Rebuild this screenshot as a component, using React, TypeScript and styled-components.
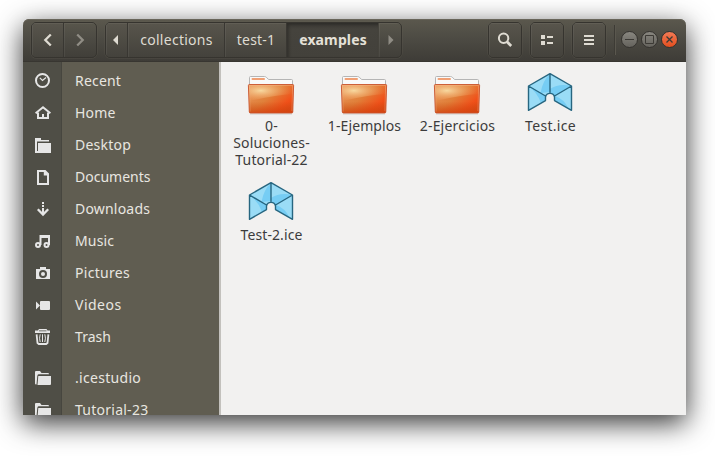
import React from "react";
import styled, { createGlobalStyle } from "styled-components";

const GlobalStyle = createGlobalStyle`
  * { box-sizing: border-box; }
  html, body { margin: 0; background: #fff; overflow: hidden; }
  body { font-family: "Noto Sans", "Open Sans", sans-serif; font-size: 14px; }
  svg { display: block; flex: none; }
`;

const Desktop = styled.div`
  width: 715px;
  height: 456px;
  padding: 19px 29px 41px 23px;
  overflow: hidden;
`;

const Window = styled.main`
  display: flex;
  flex-direction: column;
  height: 396px;
  border-radius: 6px 6px 0 0;
  box-shadow: 0 8px 28px rgba(0, 0, 0, 0.8);
`;

const HeaderBar = styled.header`
  display: flex;
  flex: none;
  align-items: flex-start;
  height: 43px;
  padding: 3px 8px 0;
  border-radius: 6px 6px 0 0;
  background: linear-gradient(#5b584d, #504e46 35%, #3e3c37);
  border-bottom: 1px solid #383631;
  box-shadow: inset 0 1px #68655a;
`;

const ButtonGroup = styled.div`
  display: flex;
  height: 36px;
  margin-right: 8px;
  border: 1px solid #36342f;
  border-radius: 5px;
  box-shadow: 0 0 0 0.5px rgba(110, 107, 95, 0.35);
  overflow: hidden;
`;

const HeaderButton = styled.button<{ $width: number; $active?: boolean; $dim?: boolean; $tracking?: number }>`
  display: flex;
  align-items: center;
  justify-content: center;
  width: ${(p) => p.$width}px;
  height: 34px;
  padding: 0 0 1px ${(p) => (p.$tracking ? 1 : 0)}px;
  border: 0;
  border-right: 1px solid ${(p) => (p.$active ? "#45433c" : "#393732")};
  font: inherit;
  font-weight: ${(p) => (p.$active ? 700 : 400)};
  letter-spacing: ${(p) => p.$tracking ?? 0}px;
  color: ${(p) => (p.$active ? "#e5e1d8" : p.$dim ? "#908d85" : "#dfdbd2")};
  background: ${(p) => (p.$active ? "linear-gradient(#3d3b36, #45433d 20%, #43413b)" : p.$dim ? "transparent" : "linear-gradient(#58554c, #44423c)")};
  box-shadow: ${(p) => (p.$active ? "inset 2px 2px 3px rgba(0,0,0,.25)" : "inset 1px 1px rgba(255,255,255,.055)")};
  &:last-child { border-right: 0; }
`;

const Spacer = styled.div`
  flex: 1;
`;

const Separator = styled.div`
  width: 2px;
  height: 30px;
  margin: 3px 5px 0 0;
  border-left: 1px solid #3d3b35;
  border-right: 1px solid #5a574e;
`;

const WindowControls = styled.div`
  display: flex;
  gap: 3px;
  padding-top: 9px;
`;

const ControlButton = styled.button<{ $close?: boolean }>`
  display: grid;
  place-items: center;
  width: 17px;
  height: 17px;
  padding: 0;
  border: 1px solid #35332f;
  border-radius: 50%;
  background: ${(p) => (p.$close ? "linear-gradient(#f37a55, #e34f1f)" : "linear-gradient(#88867f, #65635d)")};
  color: #3c3a35;
`;

const Body = styled.div`
  display: flex;
  flex: 1;
  min-height: 0;
  background: #f2f1f0;
`;

const Sidebar = styled.nav`
  width: 198px;
  padding-top: 3px;
  overflow: hidden;
  border-right: 2px solid #c3c1bd;
  background: linear-gradient(90deg, #4f4e46 0 38px, #47463f 38px 39px, #605d51 39px);
`;

const Place = styled.div<{ $tracking: number; $spaced?: boolean }>`
  display: flex;
  align-items: center;
  gap: 24px;
  height: 32px;
  margin-top: ${(p) => (p.$spaced ? 9 : 0)}px;
  padding-left: 12px;
  white-space: nowrap;
  color: #e8e6e0;
  letter-spacing: ${(p) => p.$tracking}px;
`;

const PlaceLabel = styled.span`
  padding-bottom: 2px;
`;

const Files = styled.section`
  display: grid;
  grid-template-columns: repeat(4, 93px);
  grid-auto-rows: 109px;
  flex: 1;
  align-content: start;
  padding: 7px 0 0 3.5px;
`;

const File = styled.figure`
  display: flex;
  flex-direction: column;
  align-items: center;
  margin: 0;
  color: #3c3c3c;
`;

const FileName = styled.figcaption<{ $tracking: number }>`
  padding-left: 1px;
  line-height: 17px;
  text-align: center;
  white-space: pre;
  letter-spacing: ${(p) => p.$tracking}px;
`;

const glyphs: Record<string, React.ReactNode> = {
  recent: (
    <g fill="none" stroke="#e6e6e6">
      <circle cx="7.5" cy="7.5" r="6.5" strokeWidth="2" />
      <path d="M4.8 4.8 7.5 7.5 11 4.5" strokeWidth="1.2" />
    </g>
  ),
  home: (
    <g fill="none" stroke="#e6e6e6" strokeWidth="2">
      <path d="M.6 8.2 8 2.2l7.4 6" />
      <path d="M3 7.5V13h10V7.5M8 14V9" />
    </g>
  ),
  desktop: (
    <>
      <path d="M0 1h6v2h8v1.5H2V14h1v2H0z" />
      <path d="M3 6h13v10H3z" />
    </>
  ),
  folder: (
    <>
      <path d="M0 2q0-1 1-1h4l1.5 2H13q1 0 1 1.2H3.5Q2.5 4.5 2.3 6L1.5 14.5H1Q0 14.5 0 13.5z" />
      <path d="M3.3 6H16v8q0 1-1 1H2.5z" />
    </>
  ),
  documents: <path fillRule="evenodd" d="M2 1h8.5L14 4.5V16H2zM4 3v11h8V6.5H8.8V3z" />,
  downloads: (
    <>
      <path d="M7 1h2v2H7zM7 4h2v2H7zM7 7h2v5H7z" />
      <path d="m2.8 8.3 5.2 5.2 5.2-5.2" fill="none" stroke="#e6e6e6" strokeWidth="2.3" />
    </>
  ),
  music: (
    <g fill="none" stroke="#e6e6e6" strokeWidth="2">
      <circle cx="3" cy="12" r="2" />
      <circle cx="11.5" cy="12" r="2" />
      <path d="M5.5 12V3H14v9M6 4h8" />
    </g>
  ),
  pictures: (
    <>
      <path fillRule="evenodd" d="M5 2h6v2h4v10H1V4h4zM8 5a4 4 0 1 0 0 8 4 4 0 0 0 0-8z" />
      <circle cx="8" cy="9" r="2" />
    </>
  ),
  videos: (
    <>
      <rect x="5" y="4" width="10" height="9" rx="1" />
      <path d="M1 4.5 5 8.5l-4 4z" />
    </>
  ),
  trash: (
    <>
      <path fillRule="evenodd" d="M4 0h7.5l1 1.5H15V4H0V1.5h3zM4 1.5v.8h7.5v-.8z" />
      <path d="M1.6 5.3 2.5 14l1.3 1h7.4l1.3-1 .9-8.7" fill="none" stroke="#e6e6e6" strokeWidth="1.8" />
      <path d="M5.2 5.3q-1.3 4 0 7.7M7.5 5.3V13M9.8 5.3q1.3 4 0 7.7" fill="none" stroke="#e6e6e6" />
    </>
  ),
};

const PlaceIcon = ({ name }: { name: string }) => (
  <svg width="16" height="16" viewBox="0 0 16 16" fill="#e6e6e6">{glyphs[name]}</svg>
);

const Chevron = ({ right }: { right?: boolean }) => (
  <svg width="16" height="16" viewBox="0 0 16 16" fill="none" stroke="currentColor" strokeWidth="2.3">
    <path d={right ? "m5.2 2.5 5.5 5.5-5.5 5.5" : "M10.8 2.5 5.3 8l5.5 5.5"} />
  </svg>
);

const Arrow = ({ right }: { right?: boolean }) => (
  <svg width="8" height="10" viewBox="0 0 8 10" fill="currentColor">
    <path d={right ? "M2.5 0v10L7.5 5z" : "M5 0v10L0 5z"} />
  </svg>
);

const folderFront = "M2.3 15.5h43.4q1 0 .9 1l-.8 26.500q-.1 1-1.100 1H3.400q-1 0-1.100-1l-.9-26.500q0-1 .9-1z";

const FolderIcon = () => (
  <svg width="48" height="48" viewBox="0 0 48 48">
    <defs>
      <linearGradient id="folderBase" x1="0" y1="0" x2="1" y2=".75">
        <stop offset="0" stopColor="#e8935a" />
        <stop offset=".5" stopColor="#e0803a" />
        <stop offset=".85" stopColor="#f05019" />
        <stop offset="1" stopColor="#e24a15" />
      </linearGradient>
      <radialGradient id="folderGlow" cx=".27" cy=".35" r=".7">
        <stop offset="0" stopColor="#f7d9a0" />
        <stop offset="1" stopColor="#f2a060" stopOpacity=".05" />
      </radialGradient>
      <linearGradient id="folderShade" x1="0" y1="0" x2="0" y2="1">
        <stop offset=".6" stopColor="#c94a12" stopOpacity="0" />
        <stop offset="1" stopColor="#d0420e" stopOpacity=".75" />
      </linearGradient>
    </defs>
    <path d="M3 45h42" stroke="#000" strokeOpacity=".14" />
    <path d="M2.5 18V8.500q0-1 1-1h14q1 0 1.800.8l2.400 2.200h22.800q1 0 1 1V18z" fill="#f9f9f9" stroke="#b5b5b5" />
    <path d="M5.5 10H17" stroke="#f0a075" strokeWidth="2" strokeLinecap="round" />
    <path d={folderFront} fill="url(#folderBase)" />
    <path d={folderFront} fill="url(#folderShade)" />
    <path d="M2 16h44v9Q28 26 2.5 32z" fill="url(#folderGlow)" />
    <path d="M3 42.5 2.4 16.5h43.2L45 42" fill="none" stroke="#f8bd90" strokeOpacity=".4" />
    <path d={folderFront} fill="none" stroke="#c8542c" strokeWidth=".9" />
  </svg>
);

const iceOutline = "M24 4.7 45.5 17v24.3L28.5 31.6V28a4.6 4.6 0 0 0-9 0v3.6L2.5 41.3V17z";

const IceIcon = () => (
  <svg width="48" height="48" viewBox="0 0 48 48">
    <path d={iceOutline} fill="#9adcf6" />
    <path d="M24 4.7V23L14.5 24Q16.500 12 24 4.7zM24 20q9-6 21.5-3L29 27l-5-4zM2.5 17l17 9.500v5L15 34Q11 23 2.5 17zM29 27q9 3 13.5 12.500L28.5 31.500z" fill="#76cdf4" />
    <path d={`${iceOutline}M24 4.7v19M2.5 17l17 10M45.5 17l-17 10`} fill="none" stroke="#276680" strokeWidth="1.4" strokeLinejoin="round" />
  </svg>
);

const places = [
  { icon: "recent", label: "Recent", tracking: 0.2 },
  { icon: "home", label: "Home", tracking: 0.2 },
  { icon: "desktop", label: "Desktop", tracking: 0.25 },
  { icon: "documents", label: "Documents", tracking: 0 },
  { icon: "downloads", label: "Downloads", tracking: 0.2 },
  { icon: "music", label: "Music", tracking: 0.15 },
  { icon: "pictures", label: "Pictures", tracking: 0.3 },
  { icon: "videos", label: "Videos", tracking: 0.5 },
  { icon: "trash", label: "Trash", tracking: 0.05 },
  { icon: "folder", label: ".icestudio", tracking: 0.3, spaced: true },
  { icon: "folder", label: "Tutorial-23", tracking: 0.25 },
];

const files = [
  { label: "0-\nSoluciones-\nTutorial-22", folder: true, tracking: 0.15 },
  { label: "1-Ejemplos", folder: true, tracking: 0.1 },
  { label: "2-Ejercicios", folder: true, tracking: 0.2 },
  { label: "Test.ice", folder: false, tracking: 0.3 },
  { label: "Test-2.ice", folder: false, tracking: 0.1 },
];

export default function App() {
  return (
    <Desktop>
      <GlobalStyle />
      <Window>
        <HeaderBar>
          <ButtonGroup>
            <HeaderButton $width={32}><Chevron /></HeaderButton>
            <HeaderButton $width={32} $dim><Chevron right /></HeaderButton>
          </ButtonGroup>
          <ButtonGroup>
            <HeaderButton $width={22}><Arrow /></HeaderButton>
            <HeaderButton $width={97} $tracking={0.28}>collections</HeaderButton>
            <HeaderButton $width={62} $tracking={0.2}>test-1</HeaderButton>
            <HeaderButton $width={92} $active $tracking={0.12}>examples</HeaderButton>
            <HeaderButton $width={22} $dim><Arrow right /></HeaderButton>
          </ButtonGroup>
          <Spacer />
          <ButtonGroup>
            <HeaderButton $width={32}>
              <svg width="16" height="16" viewBox="0 0 16 16" fill="none" stroke="currentColor">
                <circle cx="6.6" cy="6.3" r="4.7" strokeWidth="2" />
                <path d="m10 9.7 4.2 4.3" strokeWidth="2.7" />
              </svg>
            </HeaderButton>
          </ButtonGroup>
          <ButtonGroup>
            <HeaderButton $width={32}>
              <svg width="12" height="10" viewBox="0 0 12 10" fill="currentColor">
                <path d="M0 0h4v4H0zM0 6h4v4H0zM6 1h6v2H6zM6 7h6v2H6z" />
              </svg>
            </HeaderButton>
          </ButtonGroup>
          <ButtonGroup>
            <HeaderButton $width={32}>
              <svg width="10" height="10" viewBox="0 0 10 10" fill="currentColor">
                <path d="M0 0h10v2H0zM0 4h10v2H0zM0 8h10v2H0z" />
              </svg>
            </HeaderButton>
          </ButtonGroup>
          <Separator />
          <WindowControls>
            <ControlButton>
              <svg width="9" height="9" viewBox="0 0 9 9" stroke="currentColor"><path d="M0 4.5h9" /></svg>
            </ControlButton>
            <ControlButton>
              <svg width="9" height="9" viewBox="0 0 9 9" fill="none" stroke="currentColor"><path d="M.5.5h8v8h-8z" /></svg>
            </ControlButton>
            <ControlButton $close>
              <svg width="7" height="7" viewBox="0 0 7 7" stroke="currentColor" strokeWidth="1.3"><path d="m.5.5 6 6m0-6-6 6" /></svg>
            </ControlButton>
          </WindowControls>
        </HeaderBar>
        <Body>
          <Sidebar>
            {places.map((p) => (
              <Place key={p.label} $tracking={p.tracking} $spaced={p.spaced}>
                <PlaceIcon name={p.icon} />
                <PlaceLabel>{p.label}</PlaceLabel>
              </Place>
            ))}
          </Sidebar>
          <Files>
            {files.map((f) => (
              <File key={f.label}>
                {f.folder ? <FolderIcon /> : <IceIcon />}
                <FileName $tracking={f.tracking}>{f.label}</FileName>
              </File>
            ))}
          </Files>
        </Body>
      </Window>
    </Desktop>
  );
}
